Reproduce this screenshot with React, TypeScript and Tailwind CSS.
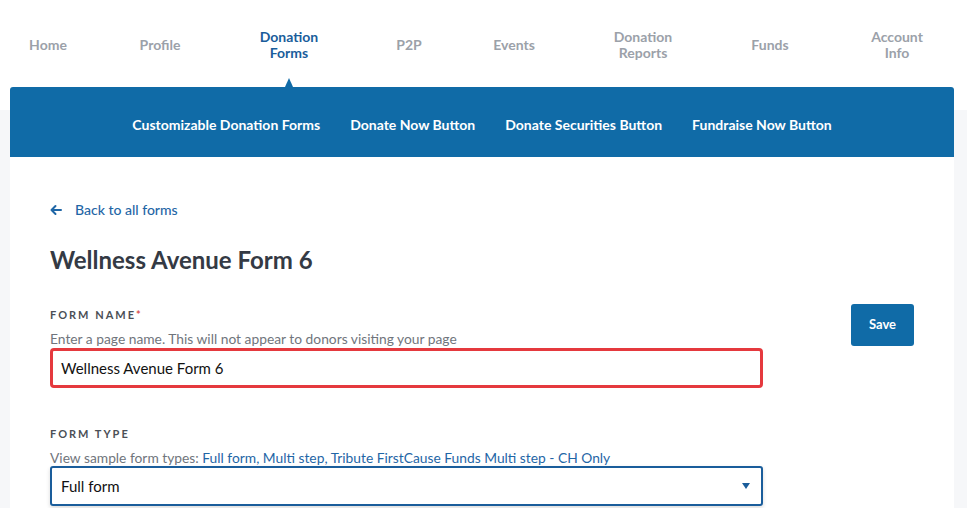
import type { ReactNode } from "react";

const topNav = [
  { label: ["Home"], ml: "ml-[3px]" },
  { label: ["Profile"], ml: "ml-[22px]" },
  { label: ["Donation", "Forms"], ml: "ml-[39px]", active: true },
  { label: ["P2P"], ml: "ml-[30px]" },
  { label: ["Events"], ml: "ml-[15px]" },
  { label: ["Donation", "Reports"], ml: "ml-[39px]" },
  { label: ["Funds"], ml: "ml-[37px]" },
  { label: ["Account", "Info"], ml: "ml-[37px]" },
];

const subNav = [
  "Customizable Donation Forms",
  "Donate Now Button",
  "Donate Securities Button",
  "Fundraise Now Button",
];

function FieldLabel({ children }: { children: ReactNode }) {
  return (
    <div className="text-[11px] font-bold leading-4 tracking-[2px] text-[#4b4f56]">
      {children}
    </div>
  );
}

export default function App() {
  return (
    <div className="min-h-[508px] w-[967px] overflow-hidden bg-[#f6f7f9] font-['Lato','Noto_Sans',sans-serif]">
      <header className="flex h-[87px] items-center bg-white pt-[3px]">
        {topNav.map((item) => (
          <div
            key={item.label.join(" ")}
            className={`relative flex w-[90px] shrink-0 flex-col items-center text-center text-[14px] font-bold leading-4 ${item.ml} ${
              item.active ? "text-[#1a5d9b]" : "text-[#9ba1a9]"
            }`}
          >
            {item.label.map((l) => (
              <span key={l}>{l}</span>
            ))}
            {item.active ? (
              <span className="absolute top-[49px] left-1/2 h-0 w-0 -translate-x-1/2 border-x-[4px] border-b-[9px] border-x-transparent border-b-[#106ba7]" />
            ) : null}
          </div>
        ))}
      </header>

      <div className="bg-[linear-gradient(#ffffff_23px,#f6f7f9_23px)] px-[10px] pr-[13px]">
        <nav className="flex h-[70px] items-center justify-center gap-[30px] rounded-t-[3px] bg-[#106ba7] pt-[4px] text-[14px] font-bold text-white">
          {subNav.map((s) => (
            <span key={s}>{s}</span>
          ))}
        </nav>

        <main className="min-h-[360px] bg-white px-[40px] pt-[43px]">
          <a className="flex items-center gap-[13px] text-[14px] font-medium leading-5 text-[#1f66a6]">
            <svg width="12" height="12" viewBox="0 0 12 12" fill="none" stroke="currentColor" strokeWidth="2" strokeLinecap="round" strokeLinejoin="round">
              <path d="M11 6H1.5M5.5 2L1.5 6l4 4" />
            </svg>
            Back to all forms
          </a>

          <h1 className="mt-[24px] text-[24px] font-bold leading-8 text-[#343a44]">
            Wellness Avenue Form 6
          </h1>

          <div className="mt-[28px] flex items-start justify-between">
            <div className="w-[713px]">
              <div className="mt-[3px]">
                <FieldLabel>
                  FORM NAME<span className="text-[#d9534f]">*</span>
                </FieldLabel>
              </div>
              <p className="mt-[7px] text-[13.8px] leading-[18px] text-[#70757c]">
                Enter a page name. This will not appear to donors visiting your page
              </p>
              <div className="flex h-[40px] items-center rounded-[4px] border-[3px] border-[#e5393e] px-[8px] text-[15px] text-[#111]">
                Wellness Avenue Form 6
              </div>

              <div className="mt-[38px]">
                <FieldLabel>FORM TYPE</FieldLabel>
              </div>
              <p className="mt-[7px] text-[13.8px] leading-[18px] text-[#70757c]">
                View sample form types:{" "}
                <span className="text-[#1f66a6]">
                  Full form, Multi step, Tribute FirstCause Funds Multi step - CH Only
                </span>
              </p>
              <div className="-mt-[1px] flex h-[40px] items-center justify-between rounded-[3px] border-2 border-[#1a5d9b] px-[9px] text-[15px] text-[#111] shadow-[0_2px_4px_rgba(0,0,0,0.15)]">
                <span>Full form</span>
                <span className="mr-[2px] h-0 w-0 border-x-[4px] border-t-[6px] border-x-transparent border-t-[#1a5d9b]" />
              </div>
            </div>

            <button className="h-[42px] w-[63px] rounded-[3px] bg-[#106ba7] text-[13px] font-bold text-white">
              Save
            </button>
          </div>
        </main>
      </div>
    </div>
  );
}
